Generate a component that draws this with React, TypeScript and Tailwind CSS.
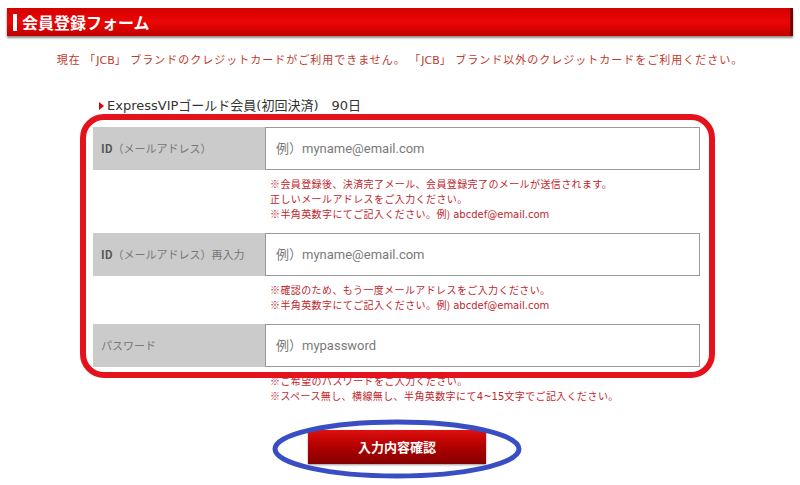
import React from 'react';

type Field = {
  label: React.ReactNode;
  placeholder: string;
  notes: React.ReactNode[];
};

const Latin = ({ children }: { children: React.ReactNode }) => (
  <span className="font-['DejaVu_Sans','Noto_Sans_CJK_JP',sans-serif] tracking-normal">{children}</span>
);

const fields: Field[] = [
  {
    label: (
      <>
        <span className="font-bold text-[#555]">ID</span>（メールアドレス）
      </>
    ),
    placeholder: '例）myname@email.com',
    notes: [
      '※会員登録後、決済完了メール、会員登録完了のメールが送信されます。',
      '正しいメールアドレスをご入力ください。',
      <>※半角英数字にてご記入ください。例) <Latin>abcdef@email.com</Latin></>,
    ],
  },
  {
    label: (
      <>
        <span className="font-bold text-[#555]">ID</span>（メールアドレス）再入力
      </>
    ),
    placeholder: '例）myname@email.com',
    notes: [
      '※確認のため、もう一度メールアドレスをご入力ください。',
      <>※半角英数字にてご記入ください。例) <Latin>abcdef@email.com</Latin></>,
    ],
  },
  {
    label: 'パスワード',
    placeholder: '例）mypassword',
    notes: [
      '※ご希望のパスワードをご入力ください。',
      <>※スペース無し、横線無し、半角英数字にて<Latin>4~15</Latin>文字でご記入ください。</>,
    ],
  },
];

function FormRow({ field }: { field: Field }) {
  return (
    <div>
      <div className="flex h-[43px]">
        <div className="flex w-[172px] items-center bg-[#cbcbcb] pl-[8px] font-['Noto_Sans_CJK_JP',sans-serif] text-[11px] text-[#777]">
          {field.label}
        </div>
        <div className="flex flex-1 items-center border border-[#9a9a9a] bg-white pl-[10px]">
          <span className="font-['Roboto','Noto_Sans_CJK_JP',sans-serif] text-[13px] text-[#7a7a7a]">
            {field.placeholder}
          </span>
        </div>
      </div>
      <div className="ml-[177px] pb-[11px] pt-[6px]">
        {field.notes.map((n, i) => (
          <p
            key={i}
            className="font-['Noto_Sans_CJK_JP',sans-serif] text-[10px] leading-[15px] tracking-[0.4px] text-[#c0262d]"
          >
            {n}
          </p>
        ))}
      </div>
    </div>
  );
}

export default function App() {
  return (
    <div className="relative h-[485px] w-[800px] overflow-hidden bg-white">
      <div className="px-[7px] pt-[8px]">
        {/* header bar */}
        <div className="flex h-[28px] items-center border-r-[3px] border-r-[#7a0000] bg-gradient-to-b from-[#d40000] via-[#ec0606] to-[#c00000] shadow-[0_2px_2px_rgba(0,0,0,0.45)]">
          <div className="ml-[6px] h-[17px] w-[4px] bg-white" />
          <h1 className="ml-[5px] font-['Noto_Sans_CJK_JP',sans-serif] text-[16px] font-bold leading-none text-white">
            会員登録フォーム
          </h1>
        </div>
      </div>

      <p className="mt-[15px] text-center font-['Noto_Sans_CJK_JP',sans-serif] text-[11px] leading-[16px] tracking-[1px] text-[#c0392b]">
        現在 「<Latin>JCB</Latin>」 ブランドのクレジットカードがご利用できません。 「<Latin>JCB</Latin>」 ブランド以外のクレジットカードをご利用ください。
      </p>

      <div className="ml-[93px] mt-[29px] w-[607px]">
        <div className="mb-[13px] flex items-center pl-[6px]">
          <span className="mr-[3px] inline-block h-0 w-0 border-y-[4px] border-l-[5px] border-y-transparent border-l-[#d00]" />
          <span className="font-['DejaVu_Sans','Noto_Sans_CJK_JP',sans-serif] text-[13px] leading-[16px] text-[#333]">
            ExpressVIPゴールド会員(初回決済)　90日
          </span>
        </div>

        {fields.map((f, i) => (
          <FormRow key={i} field={f} />
        ))}

        <div className="ml-[215px] mt-[15px] flex h-[34px] w-[178px] items-center justify-center bg-gradient-to-b from-[#e01010] via-[#b00000] to-[#850000] shadow-[0_1px_2px_rgba(0,0,0,0.4)]">
          <span className="font-['Noto_Sans_CJK_JP',sans-serif] text-[13px] font-bold text-white">
            入力内容確認
          </span>
        </div>
      </div>

      {/* annotation overlays */}
      <div className="pointer-events-none absolute left-[80px] top-[114px] h-[264px] w-[635px] rounded-[24px] border-[6px] border-[#e3121c]" />
      <svg className="pointer-events-none absolute left-[270px] top-[418px]" width="254" height="62">
        <ellipse cx="127" cy="31" rx="122" ry="27" fill="none" stroke="#3a4ec4" strokeWidth="5" />
      </svg>
    </div>
  );
}
